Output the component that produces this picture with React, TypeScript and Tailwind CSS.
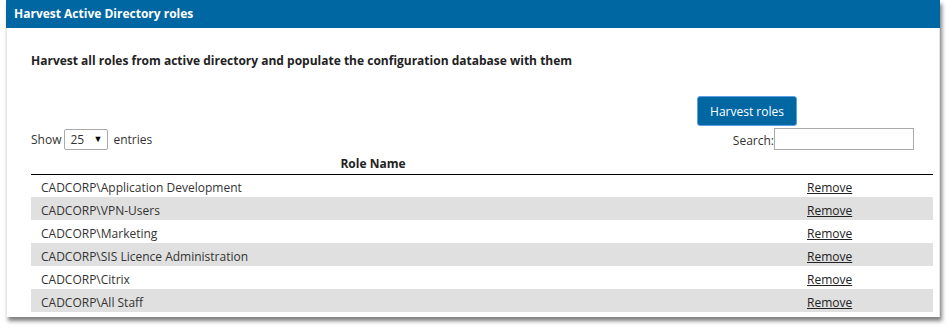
import React from 'react';

const roles = [
    'CADCORP\\Application Development',
    'CADCORP\\VPN-Users',
    'CADCORP\\Marketing',
    'CADCORP\\SIS Licence Administration',
    'CADCORP\\Citrix',
    'CADCORP\\All Staff',
];

const App: React.FC = () => {
    return (
        <div className="w-[947px] h-[334px] bg-white font-['Open_Sans',sans-serif] text-[12px] text-[#333]">
            <div className="ml-[6px] w-[934px] bg-white border-x border-[#e6e6e6] shadow-[2px_4px_4px_rgba(0,0,0,0.5)]">
                {/* Header */}
                <div className="h-[28px] bg-[#0067a3] flex items-center pl-[8px] -mx-px">
                    <h3 className="text-white font-bold text-[12px] leading-none">Harvest Active Directory roles</h3>
                </div>

                {/* Body */}
                <div className="pt-[24px] pl-[24px] pr-[6px] pb-[5px]">
                    <p className="font-bold text-[#222] leading-[17px]">
                        Harvest all roles from active directory and populate the configuration database with them
                    </p>

                    <div className="mt-[27px] pl-[666px]">
                        <button className="w-[100px] h-[30px] pt-[2px] bg-[#0067a3] border border-[#5e9ee6] rounded-[3px] text-white text-[12px] leading-none">
                            Harvest roles
                        </button>
                    </div>

                    {/* Controls */}
                    <div className="mt-[2px] flex justify-between items-center h-[22px]">
                        <div className="flex items-center">
                            <span className="pt-[2px]">Show</span>
                            <span className="ml-[3px] w-[44px] h-[21px] border border-[#aaa] rounded-[2px] flex items-center justify-between pl-[5px] pr-[5px] bg-white">
                                <span className="pt-[2px]">25</span>
                                <span className="text-[9px] text-black">▼</span>
                            </span>
                            <span className="ml-[5px] pt-[2px]">entries</span>
                        </div>
                        <div className="flex items-center mr-[19px]">
                            <span className="pt-[3px]">Search:</span>
                            <span className="w-[140px] h-[22px] border border-[#aaa] bg-white" />
                        </div>
                    </div>

                    {/* Table */}
                    <table className="w-[902px] mt-px border-collapse">
                        <thead>
                            <tr className="border-b border-black">
                                <th className="w-[684px] h-[23px] p-0 pt-[4px] font-bold text-center text-[#222] leading-none">Role Name</th>
                                <th className="p-0"></th>
                            </tr>
                        </thead>
                        <tbody>
                            {roles.map((r, i) => (
                                <tr key={r} className={`h-[23px] ${i % 2 === 1 ? 'bg-[#e0e0e0]' : 'bg-white'}`}>
                                    <td className="p-0 pl-[10px] pt-[4px] leading-none">{r}</td>
                                    <td className="p-0 pl-[92px] pt-[4px] leading-none">
                                        <a className="underline text-[#222] cursor-pointer">Remove</a>
                                    </td>
                                </tr>
                            ))}
                        </tbody>
                    </table>
                </div>
            </div>
        </div>
    );
};

export default App;
